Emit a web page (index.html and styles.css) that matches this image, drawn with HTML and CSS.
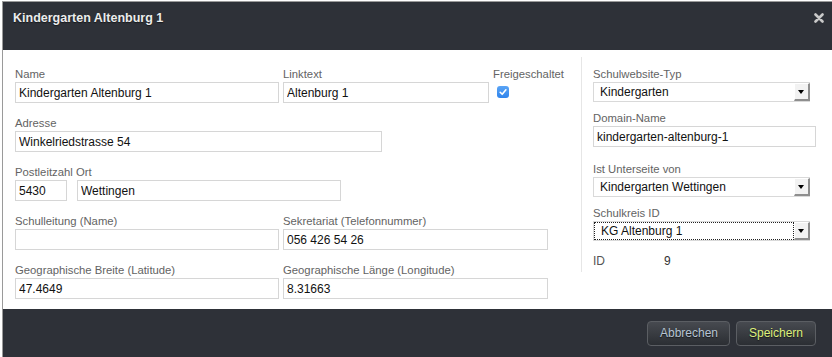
FILE: index.html
```html
<!DOCTYPE html>
<html lang="de">
<head>
  <meta charset="UTF-8">
  <title>Kindergarten Altenburg 1</title>
  <link rel="stylesheet" href="styles.css">
</head>
<body>
  <!-- Dialog -->
  <div class="dialog">
    <div class="dialog-header">
      <h1 class="dialog-title">Kindergarten Altenburg 1</h1>
      <svg class="close-icon" width="10" height="10" viewBox="0 0 10 10">
        <path d="M1.5 1.5 L8.5 8.5 M8.5 1.5 L1.5 8.5" stroke="#c9c9c9" stroke-width="2.6" stroke-linecap="round"/>
      </svg>
    </div>

    <div class="dialog-body">
      <!-- Left column -->
      <div class="col-left">
        <div class="row">
          <div class="field w-name">
            <label>Name</label>
            <input type="text" value="Kindergarten Altenburg 1">
          </div>
          <div class="field w-link">
            <label>Linktext</label>
            <input type="text" value="Altenburg 1">
          </div>
          <div class="field">
            <label>Freigeschaltet</label>
            <span class="checkbox">
              <svg width="12" height="12" viewBox="0 0 12 12"><path d="M3.2 6.3 L5.2 8.3 L8.9 3.8" fill="none" stroke="#fff" stroke-width="1.6" stroke-linecap="round" stroke-linejoin="round"/></svg>
            </span>
          </div>
        </div>

        <div class="row">
          <div class="field w-address">
            <label>Adresse</label>
            <input type="text" value="Winkelriedstrasse 54">
          </div>
        </div>

        <div class="row-block">
          <label>Postleitzahl Ort</label>
          <div class="row-inline">
            <input type="text" class="w-zip" value="5430">
            <input type="text" class="w-city" value="Wettingen">
          </div>
        </div>

        <div class="row">
          <div class="field w-name">
            <label>Schulleitung (Name)</label>
            <input type="text" value="">
          </div>
          <div class="field w-half">
            <label>Sekretariat (Telefonnummer)</label>
            <input type="text" value="056 426 54 26">
          </div>
        </div>

        <div class="row">
          <div class="field w-name">
            <label>Geographische Breite (Latitude)</label>
            <input type="text" value="47.4649">
          </div>
          <div class="field w-half">
            <label>Geographische Länge (Longitude)</label>
            <input type="text" value="8.31663">
          </div>
        </div>
      </div>

      <!-- Right column -->
      <div class="col-right">
        <div class="rfield gap-a">
          <label>Schulwebsite-Typ</label>
          <div class="select">
            <span class="select-value">Kindergarten</span>
            <span class="select-arrow"></span>
          </div>
        </div>
        <div class="rfield gap-b">
          <label>Domain-Name</label>
          <input type="text" class="w-domain" value="kindergarten-altenburg-1">
        </div>
        <div class="rfield gap-a">
          <label>Ist Unterseite von</label>
          <div class="select">
            <span class="select-value">Kindergarten Wettingen</span>
            <span class="select-arrow"></span>
          </div>
        </div>
        <div class="rfield gap-c">
          <label>Schulkreis ID</label>
          <div class="select">
            <span class="select-value focused">KG Altenburg 1</span>
            <span class="select-arrow"></span>
          </div>
        </div>
        <div class="id-row">
          <span class="id-label">ID</span>
          <span class="id-value">9</span>
        </div>
      </div>
    </div>

    <div class="dialog-footer">
      <button class="btn btn-cancel">Abbrechen</button>
      <button class="btn btn-save">Speichern</button>
    </div>
  </div>
</body>
</html>
```

FILE: styles.css
```css
body {
  margin: 0;
  background-color: #ffffff;
  font-family: "Liberation Sans", Arial, sans-serif;
}

/* Dialog */
.dialog {
  margin: 1px 0 0 2px;
  border-top: 1px solid #9a9a9a;
  border-left: 1px solid #9a9a9a;
  background: #ffffff;
}

.dialog-header {
  display: flex;
  justify-content: space-between;
  align-items: flex-start;
  height: 48px;
  box-sizing: border-box;
  padding: 9px 8px 0 10px;
  background-color: #2e3138;
}
.dialog-title {
  margin: 0;
  font-size: 12.5px;
  line-height: 15px;
  font-weight: bold;
  color: #ececec;
  text-shadow: 0 1px 1px rgba(0,0,0,0.5);
}
.close-icon {
  margin-top: 2px;
}

/* Body */
.dialog-body {
  display: flex;
  height: 259px;
  box-sizing: border-box;
  padding: 7px 0 0 12px;
}
.col-left {
  width: 566px;
  padding-top: 11px;
}
.col-right {
  flex: 1;
  align-self: flex-start;
  border-left: 1px solid #e6e6e6;
  padding: 11px 0 4px 11px;
}

label {
  display: block;
  font-size: 11.3px;
  line-height: 13px;
  color: #636363;
  margin-bottom: 1px;
  white-space: nowrap;
}

input[type="text"] {
  display: block;
  box-sizing: border-box;
  height: 21px;
  margin: 0;
  padding: 0 3px;
  border: 1px solid #d6d6d6;
  border-radius: 0;
  font-family: "Liberation Sans", Arial, sans-serif;
  font-size: 12px;
  color: #111111;
  background: #ffffff;
  outline: none;
}

.row {
  display: flex;
  gap: 4px;
  margin-bottom: 14px;
}
.row-block {
  margin-bottom: 14px;
}
.row-inline {
  display: flex;
  gap: 10px;
}

.w-name { width: 264px; }
.w-link { width: 206px; }
.w-half { width: 265px; }
.w-address { width: 367px; }
.field input { width: 100%; }
input.w-zip { width: 52px; }
input.w-city { width: 264px; }
input.w-domain { width: 223px; }

.checkbox {
  display: block;
  width: 12px;
  height: 12px;
  margin: 5px 0 0 4px;
  border-radius: 3px;
  background: linear-gradient(#5aa4f5, #2f84ec);
}
.checkbox svg {
  display: block;
}

/* Right column */
.gap-a { margin-bottom: 10px; }
.gap-b { margin-bottom: 16px; }
.gap-c { margin-bottom: 13px; }

.select {
  display: flex;
  width: 217px;
  height: 20px;
  box-sizing: border-box;
  border: 1px solid #d9d9d9;
  border-right: none;
  background: #ffffff;
}
.select-value {
  flex: 1;
  padding-left: 6px;
  font-size: 12px;
  line-height: 18px;
  color: #111111;
  white-space: nowrap;
}
.select-value.focused {
  outline: 1px dotted #222222;
  outline-offset: -1px;
  padding-left: 7px;
}
.select-arrow {
  position: relative;
  width: 16px;
  box-sizing: border-box;
  background: #f2f2f2;
  border-top: 1px solid #ffffff;
  border-left: 1px solid #ffffff;
  border-right: 2px solid #8e8e8e;
  border-bottom: 2px solid #8e8e8e;
}
.select-arrow::after {
  content: '';
  position: absolute;
  left: 3px;
  top: 6px;
  border-left: 3.5px solid transparent;
  border-right: 3.5px solid transparent;
  border-top: 4px solid #000000;
}

.id-row {
  display: flex;
  font-size: 12px;
  line-height: 14px;
}
.id-label {
  width: 71px;
  color: #555555;
}
.id-value {
  color: #333333;
}

/* Footer */
.dialog-footer {
  display: flex;
  justify-content: flex-end;
  align-items: center;
  gap: 6px;
  height: 48px;
  padding-right: 16px;
  background-color: #2e3138;
}
.btn {
  height: 25px;
  padding: 0 12px;
  border: 1px solid #5b5e63;
  border-radius: 4px;
  background: linear-gradient(#474a50, #2b2e33);
  font-family: "Liberation Sans", Arial, sans-serif;
  font-size: 12px;
  text-shadow: 0 1px 1px rgba(0,0,0,0.6);
  cursor: pointer;
}
.btn-cancel {
  width: 83px;
  color: #b7c4d3;
}
.btn-save {
  width: 80px;
  color: #def07c;
}
```
